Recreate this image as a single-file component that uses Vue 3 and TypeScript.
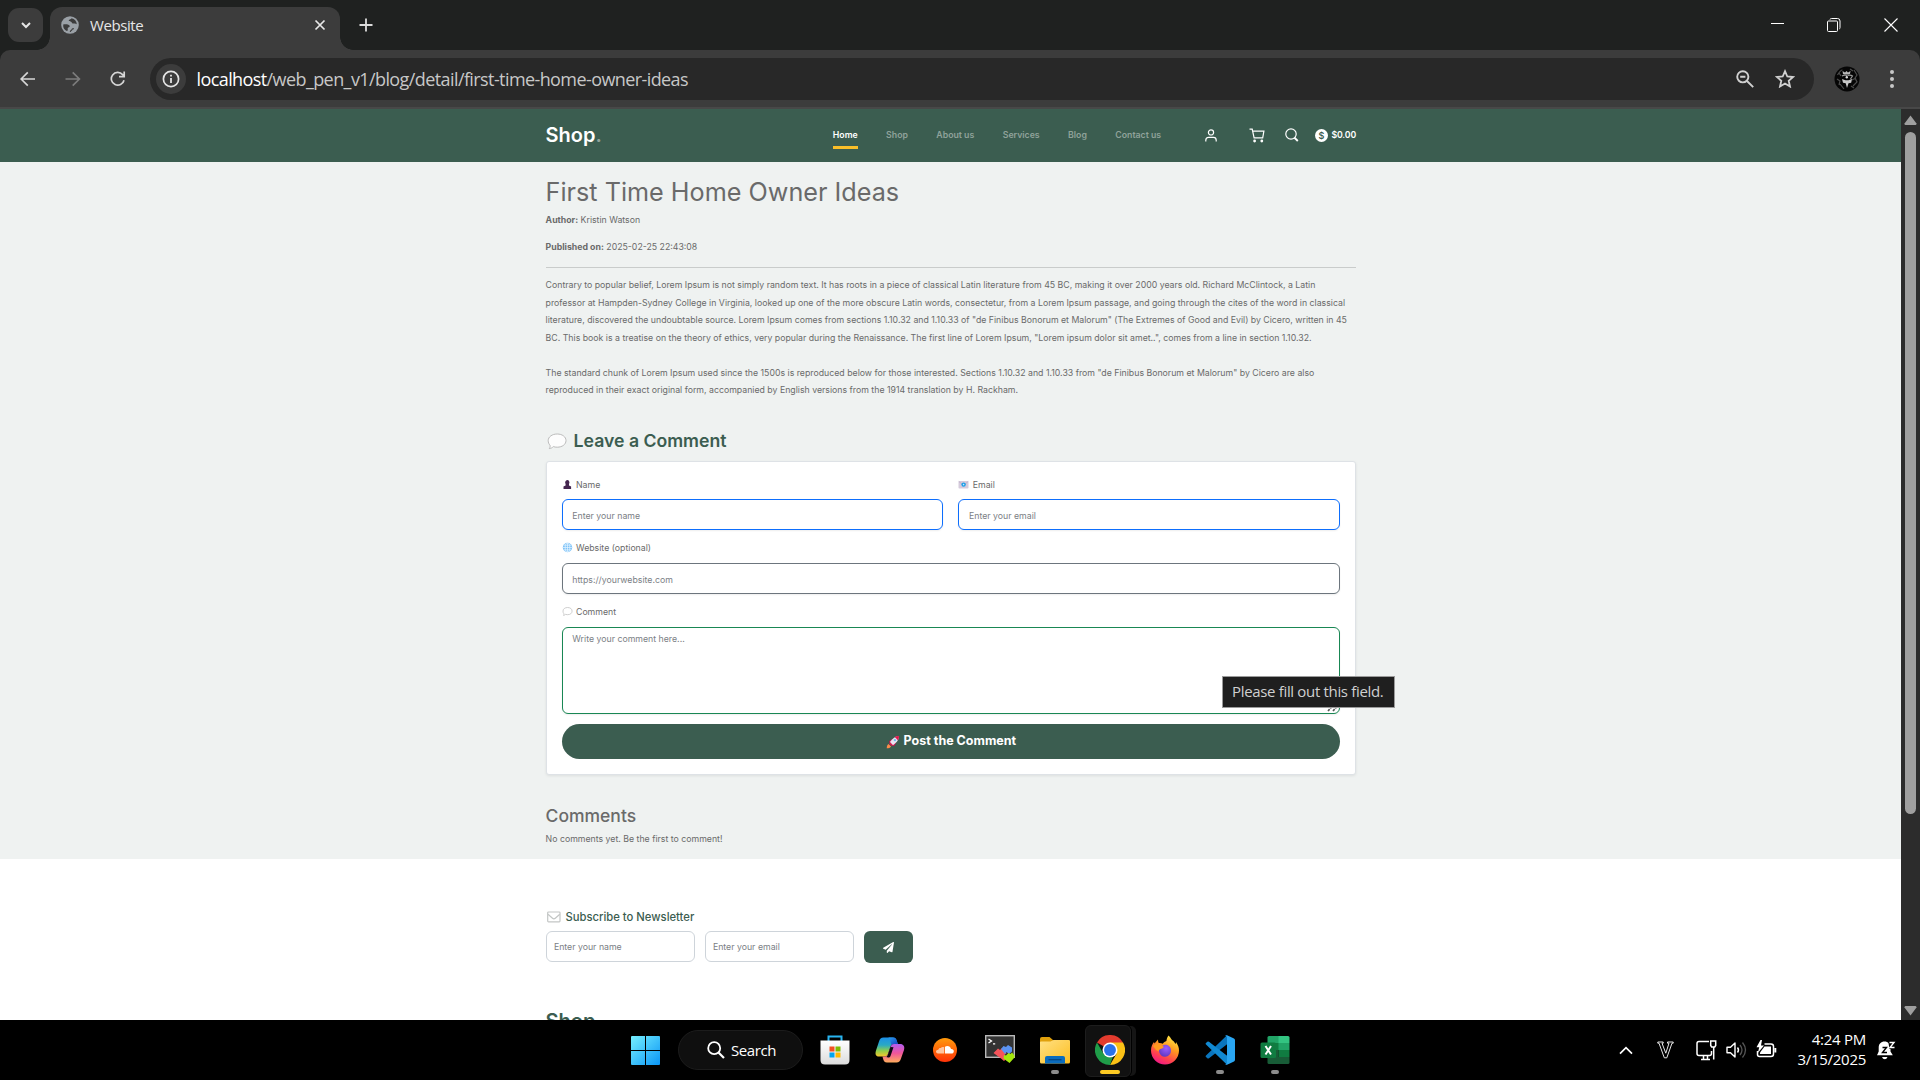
<script setup lang="ts">
import { ref } from 'vue'

interface NavItem {
  label: string
  active?: boolean
}

const navItems: NavItem[] = [
  { label: 'Home', active: true },
  { label: 'Shop' },
  { label: 'About us' },
  { label: 'Services' },
  { label: 'Blog' },
  { label: 'Contact us' },
]

const comment = ref({ name: '', email: '', website: '', text: '' })
const newsletter = ref({ name: '', email: '' })
</script>

<template>
  <div class="desktop">
    <!-- Browser title strip -->
    <header class="tabstrip">
      <div class="tab-search">
        <svg width="12" height="12" viewBox="0 0 12 12"><path d="M2 4l4 4 4-4" fill="none" stroke="#e6e6e6" stroke-width="2" /></svg>
      </div>
      <div class="tab">
        <svg class="globe" width="18" height="18" viewBox="0 0 18 18">
          <circle cx="9" cy="9" r="8.8" fill="#9aa0a6" />
          <path d="M10.500 2.200c-.3 1.300-2.300.9-2.700 2-.3 1.100 1 1.100 1.800 1.200 1.400.2 1 1.900 2.300 2.200 1 .2 2.400-.2 3.900.6A6.900 6.900 0 0 0 10.500 2.200z" fill="#3c3c3c" />
          <path d="M2.200 8.400c2.400-.3 5.300-.2 6.300 1.100.7 1-.2 1.700-1.200 2-1 .3-.4 1.600-.5 2.400-.1.600-.6 1-.9 1.200A6.900 6.900 0 0 1 2.200 8.400z" fill="#3c3c3c" />
          <path d="M9.300 15.800c.2-1.500 1.500-1 1.700-2.300.1-.8 1-.8 1.800-.9" fill="none" stroke="#3c3c3c" stroke-width="1.200" />
        </svg>
        <span class="tab-title">Website</span>
        <svg class="tab-close" width="12" height="12" viewBox="0 0 12 12"><path d="M1.500 1.500l9 9M10.500 1.500l-9 9" stroke="#e8e8e8" stroke-width="1.700" /></svg>
      </div>
      <svg class="new-tab" width="14" height="14" viewBox="0 0 14 14"><path d="M7 .5v13M.5 7h13" stroke="#dcdcdc" stroke-width="1.800" /></svg>
      <div class="window-controls">
        <svg width="14" height="14" viewBox="0 0 14 14"><path d="M1 5.500h13" stroke="#fff" /></svg>
        <svg width="14" height="14" viewBox="0 0 14 14"><path d="M.5 4a1 1 0 0 1 1-1h8a1 1 0 0 1 1 1v8.500a1 1 0 0 1-1 1h-8a1 1 0 0 1-1-1zM3 1.500q.2-1 1.500-1h6q2.500 0 2.500 2.500v6.500q0 1.300-.7 1.500" fill="none" stroke="#fff" /></svg>
        <svg width="14" height="14" viewBox="0 0 14 14"><path d="M.5.5l13 13M13.500.5l-13 13" stroke="#fff" stroke-width="1.100" /></svg>
      </div>
    </header>

    <!-- Address bar -->
    <div class="toolbar-back">
      <div class="toolbar">
        <svg class="tool back" width="16" height="16" viewBox="0 0 16 16"><path d="M15 8H1.500M7.800 1.300L1.100 8l6.700 6.700" fill="none" stroke="#d6d6d6" stroke-width="1.700" /></svg>
        <svg class="tool forward" width="16" height="16" viewBox="0 0 16 16"><path d="M.5 8H14M7.700 1.300L14.400 8l-6.700 6.700" fill="none" stroke="#7c7c7c" stroke-width="1.700" /></svg>
        <svg class="tool reload" width="16" height="16" viewBox="0 0 16 16"><path d="M14 9.200A6.400 6.400 0 1 1 12.600 3.600L14 5.400M14.200.5v5.200H9" fill="none" stroke="#d6d6d6" stroke-width="1.700" /></svg>
        <div class="omnibox">
          <span class="site-info">
            <svg width="18" height="18" viewBox="0 0 18 18"><circle cx="9" cy="9" r="7.600" fill="none" stroke="#e4e4e4" stroke-width="1.700" /><path d="M9 8v5M9 4.700v1.800" stroke="#e4e4e4" stroke-width="1.800" /></svg>
          </span>
          <span class="url"><b>localhost</b>/web_pen_v1/blog/detail/first-time-home-owner-ideas</span>
          <svg class="zoom-icon" width="18" height="18" viewBox="0 0 18 18"><circle cx="6.800" cy="6.800" r="5.600" fill="none" stroke="#d0d0d0" stroke-width="1.900" /><path d="M11 11l6.200 6.200M4.200 6.800h5.200" stroke="#d0d0d0" stroke-width="1.900" /></svg>
          <svg class="star" width="20" height="19" viewBox="0 0 20 19"><path d="M10 2.200l2.300 5.300 5.800.5-4.400 3.800 1.300 5.700-5-3-5 3 1.300-5.700L1.900 8l5.800-.5z" fill="none" stroke="#d0d0d0" stroke-width="1.800" /></svg>
        </div>
        <svg class="avatar" width="26" height="26" viewBox="0 0 26 26">
          <circle cx="13" cy="13" r="12.500" fill="#060606" />
          <path d="M3.500 9q3-5 5-5M3 13l3 2-1 4M6 18l4 5M20 4l3 5-2 3 2 4-4 4M16 3l3 2M18 14l4-2M17 20l3 2M5 7l2 3" stroke="#4d4d4d" stroke-width="1.200" fill="none" />
          <path d="M9 8L8.500 5l2.500 1.500L12.500 5l1.500 1.500L16.500 5 16 8q-3.500 1-7 0z" fill="#b9b9b9" />
          <path d="M8 10q2.500-1.500 5-.5M13.500 9.500q3-1 5 .5l-2 3" stroke="#999" fill="none" stroke-width="1.200" />
          <path d="M8 13l3.500 1.300h3L18 13l-.8 3.700-2.700.5L13 22l-1.300-4.800-2.700-.5z" fill="#c6c6c6" />
          <circle cx="12.800" cy="11.200" r="1.200" fill="#ddd" />
        </svg>
        <svg class="dots" width="4" height="20" viewBox="0 0 4 20"><circle cx="2" cy="3" r="2" fill="#c7c7c7" /><circle cx="2" cy="10" r="2" fill="#c7c7c7" /><circle cx="2" cy="17" r="2" fill="#c7c7c7" /></svg>
      </div>
    </div>

    <div class="viewport">
      <div class="page">
        <nav class="site-nav">
          <div class="container nav-row">
            <a class="logo">Shop<span>.</span></a>
            <ul class="menu">
              <li v-for="item in navItems" :key="item.label" :class="{ active: item.active }">{{ item.label }}</li>
            </ul>
            <div class="nav-icons">
              <svg class="user" width="12" height="13" viewBox="0 0 12 13"><circle cx="6" cy="3.400" r="2.600" fill="none" stroke="#fff" stroke-width="1.200" /><path d="M.8 12.500v-1.300q0-2.800 2.700-2.800h5q2.700 0 2.700 2.800v1.300" fill="none" stroke="#fff" stroke-width="1.200" /></svg>
              <svg class="cart" width="16" height="15" viewBox="0 0 16 15"><path d="M.5 1.200h2.700l1.900 8.600h8.600l1.200-6.600H3.600" fill="none" stroke="#fff" stroke-width="1.200" /><circle cx="5.600" cy="13" r="1.400" fill="#fff" /><circle cx="12.800" cy="13" r="1.400" fill="#fff" /></svg>
              <svg class="search" width="14" height="14" viewBox="0 0 14 14"><circle cx="6" cy="6" r="5.200" fill="none" stroke="#fff" stroke-width="1.200" /><path d="M9.500 9.800l3.300 3.200" stroke="#fff" stroke-width="1.900" /></svg>
              <span class="coin">$</span>
              <span class="total">$0.00</span>
            </div>
          </div>
        </nav>

        <main>
          <div class="container">
            <h1>First Time Home Owner Ideas</h1>
            <p class="meta"><b>Author:</b> Kristin Watson</p>
            <p class="meta published"><b>Published on:</b> 2025-02-25 22:43:08</p>
            <hr />
            <article>
              <p>
                Contrary to popular belief, Lorem Ipsum is not simply random text. It has roots in a piece of classical Latin literature from 45 BC, making it over 2000 years old. Richard McClintock, a Latin<br />
                professor at Hampden-Sydney College in Virginia, looked up one of the more obscure Latin words, consectetur, from a Lorem Ipsum passage, and going through the cites of the word in classical<br />
                literature, discovered the undoubtable source. Lorem Ipsum comes from sections 1.10.32 and 1.10.33 of "de Finibus Bonorum et Malorum" (The Extremes of Good and Evil) by Cicero, written in 45<br />
                BC. This book is a treatise on the theory of ethics, very popular during the Renaissance. The first line of Lorem Ipsum, "Lorem ipsum dolor sit amet..", comes from a line in section 1.10.32.
              </p>
              <p>
                The standard chunk of Lorem Ipsum used since the 1500s is reproduced below for those interested. Sections 1.10.32 and 1.10.33 from "de Finibus Bonorum et Malorum" by Cicero are also<br />
                reproduced in their exact original form, accompanied by English versions from the 1914 translation by H. Rackham.
              </p>
            </article>

            <h2>
              <svg width="20" height="17" viewBox="0 0 20 17"><path d="M10.200 1C15.200 1 19 3.800 19 7.600s-3.800 6.600-8.800 6.600c-1.400 0-2.700-.2-3.900-.6-.9 1-2.300 1.900-4 2 .8-.9 1-2.100.7-3.400C1.800 11 1.200 9.400 1.200 7.600 1.200 3.800 5.200 1 10.200 1z" fill="#fdfdfd" stroke="#b4b4b4" stroke-width=".9" /></svg>
              Leave a Comment
            </h2>

            <form class="card" @submit.prevent>
              <div class="row">
                <label class="field">
                  <span class="caption">
                    <svg width="11" height="11" viewBox="0 0 11 11"><path d="M5.300 1a2.200 2.500 0 0 1 1.700 4v1.500l2.100 1V10H1.500V7.500l2.100-1V5A2.300 2.500 0 0 1 5.300 1z" fill="#45264f" /></svg>
                    Name
                  </span>
                  <input v-model="comment.name" type="text" placeholder="Enter your name" />
                </label>
                <label class="field">
                  <span class="caption">
                    <svg width="11" height="11" viewBox="0 0 11 11"><rect x=".5" y="2" width="10" height="7.500" rx=".8" fill="#d5cbdc" /><path d="M.8 2.500l4.700 3.800 4.700-3.800" fill="none" stroke="#b9a8c4" stroke-width=".7" /><circle cx="5.600" cy="5.600" r="2.200" fill="#1e9fe8" /><circle cx="5.600" cy="5.600" r=".8" fill="#c9ecff" /></svg>
                    Email
                  </span>
                  <input v-model="comment.email" type="text" placeholder="Enter your email" />
                </label>
              </div>
              <label class="field second">
                <span class="caption">
                  <svg width="11" height="11" viewBox="0 0 11 11"><circle cx="5.500" cy="5.500" r="4.700" fill="#7fc3f8" /><path d="M5.500 1v9M1 5.500h9M1.800 3.200h7.400M1.800 7.800h7.400" stroke="#e6f5ff" stroke-width=".7" /><ellipse cx="5.500" cy="5.500" rx="2.300" ry="4.500" fill="none" stroke="#e6f5ff" stroke-width=".7" /></svg>
                  Website (optional)
                </span>
                <input v-model="comment.website" class="grey" type="text" placeholder="https://yourwebsite.com" />
              </label>
              <label class="field second">
                <span class="caption">
                  <svg width="11" height="11" viewBox="0 0 11 11"><path d="M5.600 1.500c2.700 0 4.500 1.500 4.500 3.600S8.300 8.700 5.600 8.700c-.8 0-1.500-.1-2.100-.3-.5.500-1.100.9-2 1 .4-.5.500-1.100.3-1.800C1.200 7 1 6.100 1 5.100c0-2.100 1.900-3.600 4.600-3.600z" fill="#fff" stroke="#c2c2c2" stroke-width=".8" /></svg>
                  Comment
                </span>
                <textarea v-model="comment.text" placeholder="Write your comment here..."></textarea>
                <svg class="grip" width="11" height="6" viewBox="0 0 11 6"><path d="M1 5l4-4.500M6 5l4-4.500" stroke="#555" stroke-width="1.600" stroke-dasharray="2.500 1" /></svg>
                <span class="tooltip">Please fill out this field.</span>
              </label>
              <button class="post">
                <svg width="14" height="14" viewBox="0 0 14 14">
                  <path d="M3 6.200L6 4l4.200 4L8 11.200l-1.600-.8-2.700-2.700z" fill="#c3174f" />
                  <path d="M12.700 1.200c.3 3-1 5.600-5.800 9L3.900 7.100c3-4.300 5.600-6 8.800-5.900z" fill="#e9e2f1" />
                  <path d="M12.900 1c-1.600-.2-3 .2-4.200 1l3.200 3.200c.8-1.200 1.200-2.600 1-4.200z" fill="#e0194f" />
                  <circle cx="8.900" cy="5.100" r="1.200" fill="#6bbcf0" />
                  <path d="M3.900 7.200l3 3-1.200.8-2.600-2.600z" fill="#e0194f" />
                  <path d="M2.500 8.900l2.600 2.600c-.8 1.400-2.300 1.700-4.400 1.800.1-2 .5-3.600 1.800-4.400z" fill="#ff8a4a" />
                </svg>
                <span>Post the Comment</span>
              </button>
            </form>

            <h3>Comments</h3>
            <p class="meta none">No comments yet. Be the first to comment!</p>
          </div>
        </main>

        <footer>
          <div class="container">
            <h4>
              <svg width="14" height="12" viewBox="0 0 14 12"><rect x=".7" y="1" width="12.300" height="9.800" rx=".8" fill="none" stroke="#c3c6c5" stroke-width="1.200" /><path d="M1 3.300l4.500 4q1.400 1.200 2.800 0l4.500-4" fill="none" stroke="#c3c6c5" stroke-width="1.200" /></svg>
              Subscribe to Newsletter
            </h4>
            <form class="subscribe" @submit.prevent>
              <input v-model="newsletter.name" type="text" placeholder="Enter your name" />
              <input v-model="newsletter.email" type="text" placeholder="Enter your email" />
              <button>
                <svg width="11" height="11" viewBox="0 0 512 512"><path d="M476 3.200L12.500 270.600c-18.100 10.400-15.800 35.600 2.200 43.200L121 358.400l287.300-253.200c5.500-4.900 13.300 2.600 8.600 8.300L176 407v80.500c0 23.600 28.500 32.900 42.500 15.800L282 426l124.600 52.200c14.200 6 30.400-2.900 33-18.200l72-432C515 7.800 493.300-6.800 476 3.200z" fill="#fff" /></svg>
              </button>
            </form>
            <div class="footer-logo">Shop<span>.</span></div>
          </div>
        </footer>
      </div>

      <div class="scrollbar">
        <svg width="13" height="10" viewBox="0 0 13 10"><path d="M6.500.5L12.500 8.500q0 1.500-1 1.500h-10Q.4 10 .5 8.500z" fill="#9f9f9f" /></svg>
        <div class="thumb"></div>
        <svg class="down" width="13" height="10" viewBox="0 0 13 10"><path d="M6.500 9.500L12.500 1.500q0-1.500-1-1.500h-10Q.4 0 .5 1.500z" fill="#9f9f9f" /></svg>
      </div>
    </div>

    <!-- Desktop taskbar -->
    <div class="taskbar">
      <div class="apps">
        <div class="slot start">
          <svg width="29" height="29" viewBox="0 0 29 29">
            <defs><linearGradient id="win" x1="0" y1="0" x2="1" y2="1" gradientUnits="objectBoundingBox"><stop offset="0" stop-color="#76f0ff" /><stop offset="1" stop-color="#0a95f5" /></linearGradient></defs>
            <path d="M1 0h13v14H0V1q0-1 1-1zM15 0h13q1 0 1 1v13H15zM0 15h14v14H1q-1 0-1-1zM15 15h14v13q0 1-1 1H15z" fill="url(#win)" />
          </svg>
        </div>
        <div class="search-pill">
          <svg width="18" height="18" viewBox="0 0 18 18"><circle cx="7.200" cy="7.200" r="6" fill="none" stroke="#fff" stroke-width="1.800" /><path d="M11.500 11.500l5.500 5.500" stroke="#fff" stroke-width="2.200" /></svg>
          <span>Search</span>
        </div>
        <div class="slot">
          <svg width="30" height="30" viewBox="0 0 30 30">
            <defs><linearGradient id="bag" x1="0" y1="0" x2="0" y2="1"><stop offset="0" stop-color="#fff" /><stop offset="1" stop-color="#dcdcdc" /></linearGradient></defs>
            <path d="M8.500 6V1.500h13V6" fill="none" stroke="#28b4f0" stroke-width="2" />
            <path d="M.5 5.500h29V25q0 4.500-4.500 4.500H5Q.5 29.500.5 25z" fill="url(#bag)" />
            <path d="M9.500 11.500h5v5h-5z" fill="#f25022" /><path d="M15.500 11.500h5v5h-5z" fill="#7fba00" /><path d="M9.500 17.500h5v5h-5z" fill="#00a4ef" /><path d="M15.500 17.500h5v5h-5z" fill="#ffb900" />
          </svg>
        </div>
        <div class="slot">
          <svg width="30" height="28" viewBox="0 0 30 28">
            <defs>
              <linearGradient id="cpA" x1="0" y1="0" x2="0" y2="1"><stop offset="0" stop-color="#1b8fe8" /><stop offset=".4" stop-color="#2aa9c4" /><stop offset=".7" stop-color="#8fce4b" /><stop offset="1" stop-color="#f7c62c" /></linearGradient>
              <linearGradient id="cpB" x1="0" y1="0" x2="0" y2="1"><stop offset="0" stop-color="#b15cf0" /><stop offset=".5" stop-color="#f0569a" /><stop offset="1" stop-color="#ffad5c" /></linearGradient>
              <linearGradient id="cpC" x1="0" y1="0" x2="1" y2="1"><stop offset="0" stop-color="#2aa0f0" /><stop offset="1" stop-color="#1740c0" /></linearGradient>
            </defs>
            <path d="M8.500 1.500H18c2.500 0 3.300 1.500 4 4l.8 2.500h-4c-2 0-2.800 1-3.500 3L13 18c-.8 2-2 2.500-4 2.500H4c-3.500 0-4-2.500-3-6L4 5.500c.8-2.500 2-4 4.500-4z" fill="url(#cpA)" />
            <path d="M16 1.500h2c2.500 0 3.300 1.500 4 4l.8 2.500h-4l-2.500.5c-1-2.500-1-6-3-7z" fill="url(#cpC)" />
            <path d="M21.500 26.500H12c-2.500 0-3.300-1.500-4-4L7.500 20.500H9c2 0 3.300-.5 4-2.500l2.500-7c.7-2 1.500-3 3.500-3h6c3.500 0 5 2.500 4 6l-3 8.500c-.8 2.500-2 4-4.500 4z" fill="url(#cpB)" />
            <path d="M15.500 11l3 .3-3 8.700c-.5 1-1.200 1.500-2.300 1.500l-2-.5c1-.6 1.500-1.500 1.900-3z" fill="#0a0a10" />
          </svg>
        </div>
        <div class="slot">
          <svg width="24" height="24" viewBox="0 0 24 24">
            <defs><linearGradient id="sc" x1="0" y1="0" x2="0" y2="1"><stop offset="0" stop-color="#ff9a0a" /><stop offset="1" stop-color="#ff3208" /></linearGradient></defs>
            <circle cx="12" cy="12" r="12" fill="url(#sc)" />
            <path d="M12 8.700c2.500-1.600 5.600-.2 6 2.300 1.700-.2 2.800.900 2.800 2.200 0 1.400-1 2.300-2.400 2.300H12z" fill="#fff" />
            <path d="M11.200 9.200v6.300H5c-1.300 0-2-.8-2-1.900s1-2 2.300-1.900c.4-1.600 1.500-2 2.500-1.700.7-1 1.900-1.300 3.400-.8z" fill="#ffc7a0" />
          </svg>
        </div>
        <div class="slot">
          <svg width="30" height="30" viewBox="0 0 30 30">
            <rect x=".7" y=".7" width="28.600" height="21.600" fill="#333" stroke="#b9b9b9" stroke-width="1.400" />
            <path d="M3.500 4l3 2-3 2M8 8.800h2.200" fill="none" stroke="#fff" stroke-width="1.300" />
            <path d="M8.500 18l4.500-4.500 2 1.500 2-2 4.500 5-2 2 2.500 3-3 3-3-2.500z" fill="#f5545a" />
            <path d="M16 14l2.500-3 2.500 1 2-2 4 2.500v4l-3 2.500-2.500-2-1.500 2z" fill="#5b93f2" />
            <path d="M19 20l2 .5 2.500-2.500 2 1 1.500-1.500 2.500 3v2l-5 5.500-6-4.500z" fill="#a5e80c" />
          </svg>
        </div>
        <div class="slot running">
          <svg width="30" height="28" viewBox="0 0 30 28">
            <defs><linearGradient id="fold" x1="0" y1="0" x2="1" y2="1"><stop offset="0" stop-color="#ffe083" /><stop offset="1" stop-color="#fdbf22" /></linearGradient></defs>
            <path d="M0 3q0-2 2-2h7.500l4 3.500V9H0z" fill="#e0a00c" />
            <path d="M0 6q0-.500 1-.5h9.500L13.500 4H29q1 0 1 1v21q0 1.500-1.500 1.500h-27Q0 27.500 0 26z" fill="url(#fold)" />
            <path d="M5 27.500V22q0-2 2-2h16q2 0 2 2v5.500z" fill="#0b6cbd" /><path d="M8.500 23.700h13" stroke="#06447f" stroke-width="1.200" />
          </svg>
        </div>
        <div class="slot current">
          <svg width="30" height="30" viewBox="0 0 48 48">
            <path d="M24 24L3.200 12A24 24 0 0 1 44.800 12z" fill="#e33b2e" />
            <path d="M24 12h20.800A24 24 0 0 1 24 48l10.400-18z" fill="#fbc116" />
            <path d="M3.200 12l10.400 18L24 36l4.500-1L24 48A24 24 0 0 1 3.200 12z" fill="#1f9d49" />
            <circle cx="24" cy="24" r="12" fill="#fff" /><circle cx="24" cy="24" r="9.500" fill="#2b72ea" />
          </svg>
        </div>
        <div class="slot">
          <svg width="30" height="30" viewBox="0 0 30 30">
            <defs>
              <linearGradient id="ff" x1=".8" y1="0" x2=".3" y2="1"><stop offset="0" stop-color="#fff04a" /><stop offset=".4" stop-color="#ff9a1e" /><stop offset=".75" stop-color="#ff4050" /><stop offset="1" stop-color="#f0168a" /></linearGradient>
              <radialGradient id="ffc" cx=".6" cy=".3" r=".8"><stop offset="0" stop-color="#9a5cff" /><stop offset="1" stop-color="#5a35b8" /></radialGradient>
            </defs>
            <path d="M18.500.5c1.500 1 2.200 3 3.500 4.500 1.300.8 2.500 2 3.500 4 .500-.4.500-1.500.5-2 2 3 3 5.500 3 8.500a14 14 0 0 1-28 0c0-4 1.500-6.500 3-8.500l.5 1.500L8 4.500c0 1.500.2 2.500.8 3.500 1.200-.2 2.700 0 4 .8 1-1.500 2.200-2.300 3.600-2.800.300-2 .9-4 2.100-5.500z" fill="url(#ff)" />
            <path d="M9 11.500c1.500.6 3-.500 5-1.500 4-1 7 2 7 5.500a6 6 0 0 1-12 .5c0-1 .2-1.500.8-2l3-.8z" fill="url(#ffc)" />
            <path d="M3 11c2-2 5-3 8-1l3 2c-1 1.500-3 1.300-4.500 2.500-1 .8-.8 2-.8 2L6 15z" fill="#ff9a1e" />
          </svg>
        </div>
        <div class="slot running">
          <svg width="30" height="30" viewBox="0 0 30 30">
            <path d="M22 .3L1 20.500q-1 .8 0 1.600l1.300 1.200q.8.600 1.700 0L23 8.500z" fill="#0a75bd" />
            <path d="M22 29.700L1 9.500q-1-.8 0-1.600l1.300-1.200q.8-.600 1.700 0L23 21.500z" fill="#1189d2" />
            <path d="M22 .3l6.500 3q1.500.7 1.500 2v19.400q0 1.300-1.500 2l-6.500 3q-1 .3-2-.7 2 .5 2-1.500v-25q0-2-2-1.500 1-1 2-.7z" fill="#2aa6f2" />
          </svg>
        </div>
        <div class="slot running">
          <svg width="30" height="28" viewBox="0 0 30 28">
            <path d="M7.500 1.500q0-1.500 1.500-1.500h10v14H7.500z" fill="#21a366" /><path d="M18.500 0H28q1.500 0 1.500 1.500V7h-11z" fill="#33c481" /><path d="M18.500 7h11v7h-11z" fill="#21a366" /><path d="M7.500 7h11v7h-11z" fill="#107c41" /><path d="M7.500 14h11v14H9q-1.500 0-1.500-1.500z" fill="#185c37" /><path d="M18.500 14h11v7h-11z" fill="#107c41" /><path d="M17.500 21h12v5.500q0 1.500-1.500 1.500H17.500z" fill="#185c37" />
            <rect x=".5" y="6.500" width="15.500" height="15.500" rx="1.500" fill="#107c41" />
            <path d="M5.500 10l5.500 8.500M11 10l-5.500 8.500" stroke="#fff" stroke-width="2" />
          </svg>
        </div>
      </div>
      <div class="tray">
        <svg class="chev" width="14" height="9" viewBox="0 0 14 9"><path d="M1 7.700l6-6 6 6" fill="none" stroke="#fff" stroke-width="1.700" /></svg>
        <svg class="vee" width="17" height="18" viewBox="0 0 17 18"><path d="M.8 1h5.400v1.200H5l3.800 10L12 2.200h-1.500V1h5.700v1.200h-1.200L9.800 16.800H7.300L2 2.200H.8z" fill="none" stroke="#e8e8e8" stroke-width="1" /></svg>
        <svg class="monitor" width="22" height="21" viewBox="0 0 22 21"><path d="M13 1.500H3Q1 1.500 1 3.500v10q0 2 2 2h10.500q2 0 2-2V11M5 19.500h9M7.500 16v3M11.500 16v3" fill="none" stroke="#fff" stroke-width="1.500" /><path d="M14.700 1h5v4.500l-1 1.500h-3l-1-1.500zM17.700 7v12.500" fill="none" stroke="#fff" stroke-width="1.500" /></svg>
        <svg class="speaker" width="21" height="18" viewBox="0 0 21 18"><path d="M1 6.300h3.500L9 2v14l-4.500-4.300H1z" fill="none" stroke="#fff" stroke-width="1.400" stroke-linejoin="round" /><path d="M11.500 6.500q2 2.500 0 5" fill="none" stroke="#fff" stroke-width="1.400" /><path d="M14 4q4 5 0 10M16.500 1.500q6 7.500 0 15" fill="none" stroke="#555" stroke-width="1.300" /></svg>
        <svg class="battery" width="21" height="18" viewBox="0 0 21 18"><path d="M8.500 4h6.500q2.500 0 2.500 2.500V14q0 2.500-2.500 2.500H3.500Q1.500 16.500 1.500 14.500V11" fill="none" stroke="#fff" stroke-width="1.500" /><path d="M8.500 6.500h6.500v7.500H4v-1.500z" fill="#fff" /><path d="M19.300 8v4.500" stroke="#fff" stroke-width="2" /><path d="M4.500 0L.5 7.200h2.700L1.800 13 8 5.500H5L6 0z" fill="#fff" /></svg>
        <div class="clock"><span>4:24 PM</span><span>3/15/2025</span></div>
        <svg class="bell" width="19" height="20" viewBox="0 0 19 20"><path d="M7.500 1.500c3.500 0 6 2.500 6 6v4l2.300 3.700H0L1.700 11.500v-4c0-3.500 2.300-6 5.800-6z" fill="#fff" /><path d="M5 17h5.500q-.8 2.300-2.700 2.300T5 17z" fill="#fff" /><path d="M5.500 7.500h4L5.500 12.500h4.500" fill="none" stroke="#000" stroke-width="1.400" /><path d="M11 0h8v9h-6.500z" fill="#000" /><path d="M12.500 2.500h4.500l-4 5h4.500" fill="none" stroke="#fff" stroke-width="1.400" /></svg>
      </div>
    </div>
  </div>
</template>

<style>
body { margin: 0; overflow: hidden; background: #000; }
</style>

<style scoped>
* { box-sizing: border-box; }
svg { display: block; flex: none; }
h1, h2, h3, h4, p, ul { margin: 0; padding: 0; }
button { border: 0; padding: 0; }

.desktop {
  width: 1920px;
  height: 1080px;
  display: flex;
  flex-direction: column;
  overflow: hidden;
  font-family: "Open Sans", "Noto Sans", sans-serif;
}

/* Browser */
.tabstrip { height: 50px; flex: none; background: #1f2120; display: flex; align-items: center; padding-left: 8px; }
.tab-search { position: relative; z-index: 1; width: 35px; height: 34px; border-radius: 11px; background: #3c3c3c; display: flex; align-items: center; justify-content: center; margin-right: 7px; }
.tab { position: relative; width: 290px; height: 43px; align-self: flex-end; background: #3c3c3c; border-radius: 12px 12px 0 0; display: flex; align-items: center; padding: 0 14px 7px 11px; }
.tab::before, .tab::after { content: ""; position: absolute; bottom: 0; width: 13px; height: 13px; }
.tab::before { left: -13px; background: radial-gradient(circle at 0 0, #1f2120 12.500px, #3c3c3c 13px); }
.tab::after { right: -13px; background: radial-gradient(circle at 100% 0, #1f2120 12.500px, #3c3c3c 13px); }
.tab-title { margin-left: 11px; flex: 1; color: #e6e6e6; font-size: 15px; letter-spacing: -0.420px; line-height: 20px; }
.new-tab { margin-left: 19px; }
.window-controls { margin-left: auto; display: flex; gap: 43px; padding-right: 22px; }
.toolbar-back { flex: none; height: 59px; background: #1f2120; }
.toolbar { height: 59px; border-radius: 10px 10px 0 0; background: #3c3c3c; border-bottom: 2px solid #484848; display: flex; align-items: center; padding: 0 26px 0 20px; }
.forward { margin-left: 29px; }
.reload { margin-left: 29px; }
.omnibox { margin-left: 24px; width: 1665px; height: 42px; border-radius: 21px; background: #282828; display: flex; align-items: center; padding: 0 19px 0 6px; }
.site-info { width: 30px; height: 30px; border-radius: 50%; background: #3c3c3c; display: flex; align-items: center; justify-content: center; }
.url { margin-left: 10.500px; flex: 1; font-size: 18px; line-height: 24px; color: #c7c7c7; white-space: nowrap; letter-spacing: -0.590px; }
.url b { font-weight: 400; color: #fff; }
.star { margin-left: 21px; }
.avatar { margin-left: 20px; }
.dots { margin-left: 30px; }

.viewport { flex: none; height: 911px; display: flex; overflow: hidden; }
.page { width: 1901px; height: 911px; overflow: hidden; background: #fff; font-family: Inter, sans-serif; color: #6a6a6a; font-size: 8.750px; }
.container { width: 810.500px; margin: 0 0 0 545.600px; }

/* Site navigation */
.site-nav { height: 53px; background: #3b5d50; overflow: hidden; }
.nav-row { display: flex; align-items: center; height: 52px; }
.logo { font-size: 20px; font-weight: 600; color: #fff; line-height: 24px; width: 287.200px; }
.logo span { color: #8fa29a; }
.menu { list-style: none; display: flex; gap: 28.400px; font-weight: 600; color: #8fa29a; font-size: 8.750px; line-height: 14px; white-space: nowrap; }
.menu li { position: relative; }
.menu .active { color: #fff; }
.menu .active::after { content: ""; position: absolute; left: 0; right: 0; bottom: -7px; height: 3px; background: #f9bf29; }
.nav-icons { margin-left: auto; display: flex; align-items: center; color: #fff; }
.cart { margin-left: 32.500px; }
.search { margin-left: 19.500px; }
.coin { margin-left: 16px; width: 13px; height: 13px; border-radius: 50%; background: #fff; color: #3b5d50; font-size: 9px; line-height: 13px; text-align: center; font-weight: 600; }
.total { margin-left: 3.500px; font-weight: 600; font-size: 8.750px; letter-spacing: -0.120px; }

/* Article */
main { height: 697px; background: #eff2f1; }
h1 { padding-top: 14px; height: 46px; line-height: 32px; font-size: 25.200px; font-weight: 400; }
.meta { margin-top: 3px; line-height: 19px; height: 18px; }
.published { margin-top: 9px; }
hr { margin: 11px 0 8px; border: 0; height: 1px; background: #c9cccb; }
article { height: 123.500px; line-height: 17.500px; padding-top: 1.100px; white-space: nowrap; }
article p + p { margin-top: 17.500px; }
h2 { margin-top: 29.500px; height: 24px; line-height: 24px; display: flex; align-items: center; gap: 7px; padding-left: 1px; font-size: 17.650px; font-weight: 600; color: #3b5d50; }

/* Forms */
.card { margin-top: 8px; height: 314px; background: #fff; border: 1px solid #dee2e6; border-radius: 3px; box-shadow: 0 1px 3px rgba(0, 0, 0, 0.08); padding: 15px; }
.row { display: flex; gap: 15px; }
.row .field { flex: 1; }
.field { display: block; position: relative; }
.caption { height: 22px; display: flex; gap: 3.400px; line-height: 16px; }
.caption svg { margin-top: 2px; }
.second { margin-top: 10px; }
.second .caption { height: 23px; }
input, textarea { display: block; width: 100%; height: 31px; border: 1px solid #0d6efd; border-radius: 6px; background: #fff; padding: 2px 9.700px 0; font-family: inherit; font-size: 8.750px; box-shadow: 0 1px 2px rgba(0, 0, 0, 0.07); outline: none; color: #212529; }
input::placeholder, textarea::placeholder { color: #7b8085; opacity: 1; }
.grey { border-color: #6c757d; }
textarea { height: 87px; border-color: #198754; resize: none; padding: 4px 9.700px; line-height: 14px; }
.grip { position: absolute; right: 2px; bottom: 2px; }
.tooltip { position: absolute; left: 660.400px; top: 72px; width: 173px; height: 32px; background: #1f1f1f; border: 1px solid #9b9b9b; color: #d0d0d0; font: 15px/28px "Open Sans", sans-serif; padding-left: 9px; white-space: nowrap; letter-spacing: -0.330px; }
.post { margin-top: 10px; width: 100%; height: 35px; border-radius: 18px; background: #3b5d50; color: #fff; font: 700 12.500px Inter, sans-serif; display: flex; align-items: center; justify-content: center; gap: 4px; }
.post span { padding-bottom: 2px; }
h3 { margin-top: 29px; font-size: 17.500px; line-height: 24px; font-weight: 500; }
.none { margin-top: 2px; }

/* Newsletter */
h4 { padding: 48px 0 0 1.800px; height: 68px; line-height: 20px; display: flex; align-items: center; gap: 4px; font-size: 11.250px; font-weight: 500; color: #3b5d50; }
.subscribe { margin-top: 4px; height: 32px; display: flex; gap: 10px; }
.subscribe input { width: 149px; border-color: #ced4da; box-shadow: none; padding: 1px 7.300px 0; }
.subscribe button { width: 49px; height: 32px; border-radius: 6px; background: #3b5d50; display: flex; align-items: center; justify-content: center; }
.footer-logo { margin-top: 46px; font-size: 20px; line-height: 24px; font-weight: 600; color: #3b5d50; }
.footer-logo span { opacity: 0.5; }

.scrollbar { width: 19px; background: #2c2c2c; display: flex; flex-direction: column; align-items: center; padding: 6px 0 4px; }
.thumb { margin-top: 7px; width: 11px; height: 682px; border-radius: 6px; background: #9f9f9f; }
.down { margin-top: auto; }

/* Taskbar */
.taskbar { flex: none; height: 60px; background: #000; display: flex; align-items: center; }
.apps { display: flex; align-items: center; margin-left: 617.500px; }
.slot { width: 55px; height: 50px; position: relative; display: flex; align-items: center; justify-content: center; }
.search-pill { width: 125px; height: 40px; margin: 0 4px 0 5.500px; border-radius: 20px; background: #0f0f0f; border: 1px solid #1c1c1c; display: flex; align-items: center; padding-left: 28px; gap: 6px; color: #fff; font-size: 15px; letter-spacing: -0.4px; }
.running::after, .current::after { content: ""; position: absolute; left: 50%; bottom: 1px; width: 8px; height: 4px; margin-left: -4px; border-radius: 2px; background: #8c8c8c; }
.current::after { width: 20px; margin-left: -10px; background: #fdca23; }
.current::before { content: ""; position: absolute; left: 2.500px; top: 0; width: 44px; height: 50px; border-radius: 6px; background: #111; border: 1px solid #1d1d1d; box-shadow: 1px 0 0 #000, 6px 0 0 -1px #151515; }
.current svg { position: relative; }
.tray { margin-left: auto; display: flex; align-items: center; color: #fff; padding-right: 24px; }
.vee { margin-left: 24px; }
.monitor { margin-left: 22px; }
.speaker { margin-left: 8px; }
.battery { margin-left: 9px; margin-top: -3px; }
.clock { width: 89px; margin-top: -2px; display: flex; flex-direction: column; text-align: right; font-size: 15px; line-height: 20px; letter-spacing: -0.270px; }
.bell { margin-left: 11px; }
</style>
